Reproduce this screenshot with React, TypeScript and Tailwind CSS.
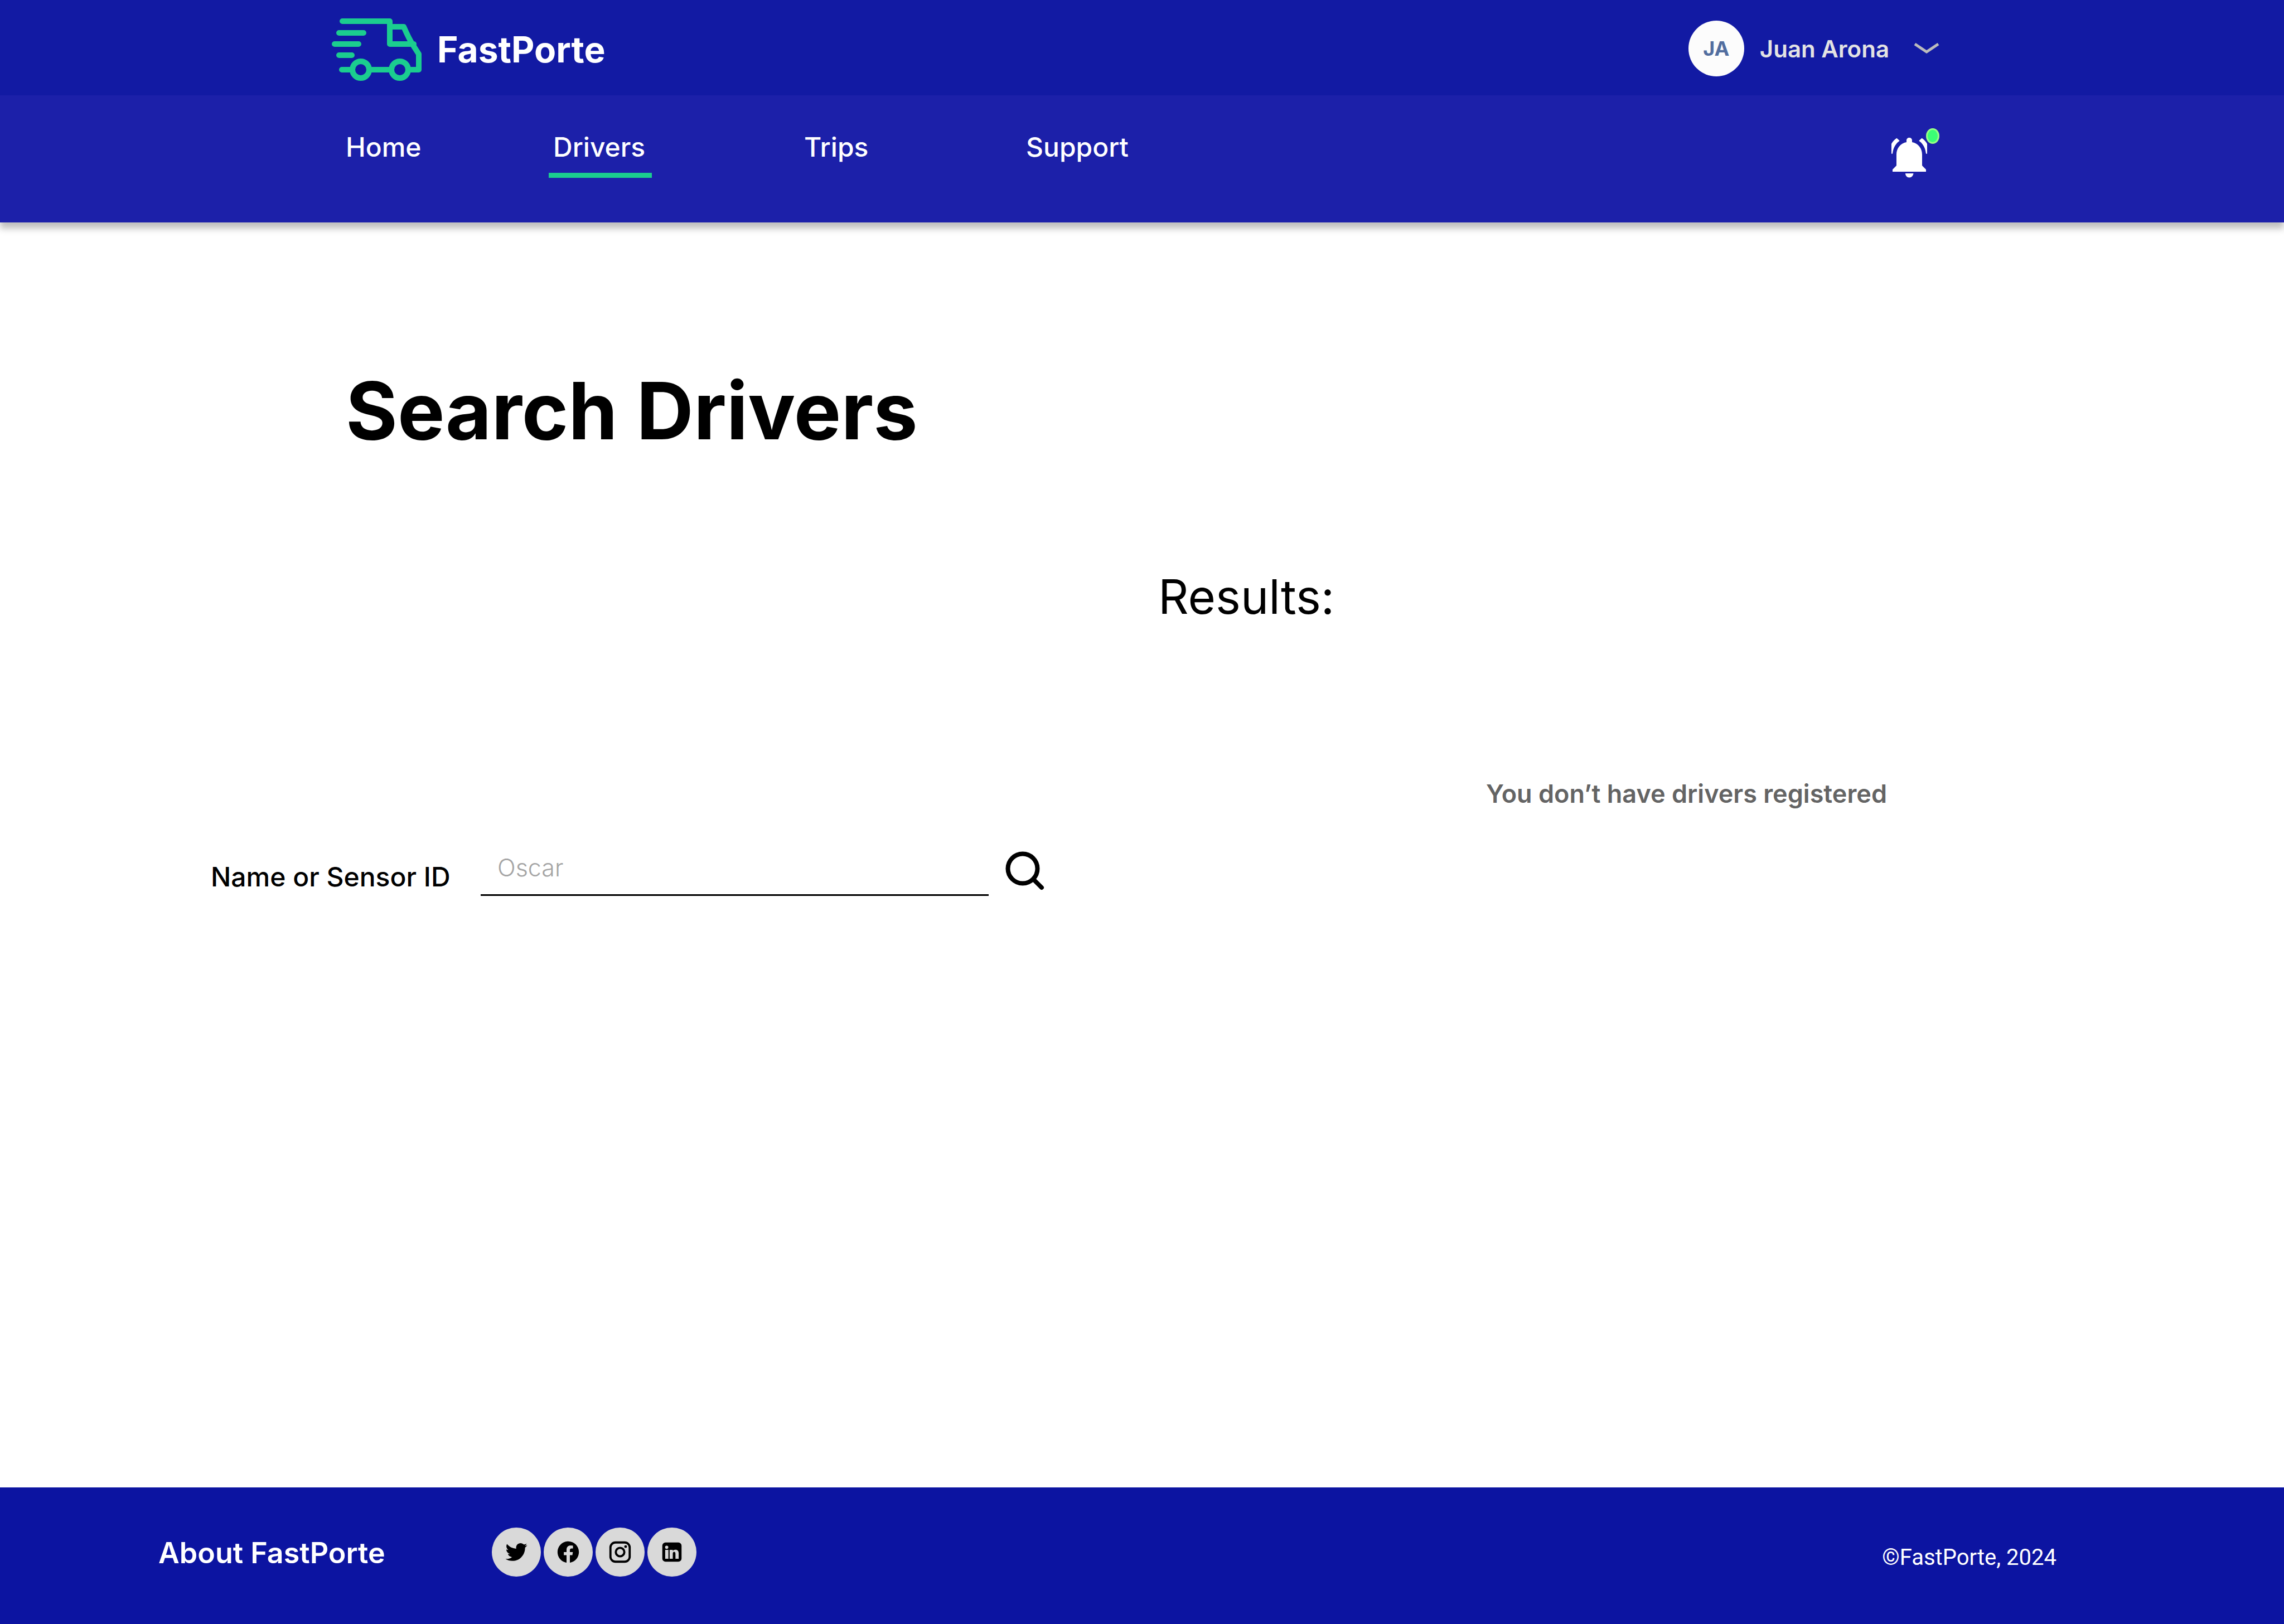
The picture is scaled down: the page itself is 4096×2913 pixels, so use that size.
import { type ReactNode } from "react";
import { RiFacebookCircleFill, RiTwitterFill } from "react-icons/ri";

const NAV = [
  { label: "Home", active: false, box: "w-[364px]" },
  { label: "Drivers", active: true, box: "w-[458px]" },
  { label: "Trips", active: false, box: "w-[398px]" },
  { label: "Support", active: false, box: "" },
];

function Truck() {
  return (
    <svg className="h-[116px] w-[164px]" viewBox="0 0 164 116" fill="none" stroke="#1bcd8f" strokeWidth="10" strokeLinecap="round" strokeLinejoin="round" aria-hidden="true">
      <path d="M20 7H105V48H148M105 17H130Q140 40 148 52L157 66V94H19" />
      <path d="M14 28H58M6 48H49M14 68H37" />
      <circle cx="53" cy="94" r="15" fill="#121aa3" />
      <circle cx="123" cy="94" r="15" fill="#121aa3" />
    </svg>
  );
}

function Bell() {
  return (
    <svg className="h-[72px] w-[64px]" viewBox="0 0 64 72" fill="#fff" aria-hidden="true">
      <path d="M9 50V30C9 19 16 10 27 8V5C27 2 29 0 32 0S37 2 37 5V8C48 10 55 19 55 30V50L62 57V61H2V57Z" />
      <path d="M25 64H39.500C39 68 36 71.500 32 71.500S25 68 25 64Z" />
      <path d="M9.500 0.700L14.700 5.500C7 11 3 19 2 28.700H0V11C2 7 5.500 3.500 9.500 0.700Z" />
      <path d="M54.500 0.700L49.300 5.500C57 11 61 19 62 28.700H64V11C62 7 58.500 3.500 54.500 0.700Z" />
    </svg>
  );
}

function Instagram() {
  return (
    <svg className="size-[46px]" viewBox="0 0 24 24" fill="none" stroke="currentColor" strokeWidth="2" aria-hidden="true">
      <rect x="3" y="3" width="18" height="18" rx="4.700" />
      <circle cx="12" cy="12" r="4" />
      <circle cx="17.200" cy="6.900" r="1.250" fill="currentColor" stroke="none" />
    </svg>
  );
}

function LinkedIn() {
  return (
    <svg className="size-[46px]" viewBox="0 0 24 24" fill="currentColor" fillRule="evenodd" aria-hidden="true">
      <path d="M6 3H18A3 3 0 0 1 21 6V18A3 3 0 0 1 18 21H6A3 3 0 0 1 3 18V6A3 3 0 0 1 6 3ZM7.100 5.950A1.500 1.500 0 1 0 7.100 8.950A1.500 1.500 0 1 0 7.100 5.950ZM5.700 9.900V18.300H8.700V9.900ZM9.850 9.900V18.300H12.800V13.600C12.800 12.500 13.200 11.800 14.050 11.800S15.300 12.500 15.300 13.600V18.300H18.300V13C18.300 11 17.200 9.750 15.400 9.750C14.200 9.750 13.300 10.200 12.800 11V9.900Z" />
    </svg>
  );
}

function Social({ label, children }: { label: string; children: ReactNode }) {
  return (
    <a href="#" aria-label={label} className="flex size-[88px] items-center justify-center rounded-full bg-[#d9d9d9] text-black">
      {children}
    </a>
  );
}

export default function App() {
  return (
    <div className="flex min-h-screen flex-col bg-white font-[Inter,sans-serif] text-black">
      <header className="shadow-[0_11px_11px_rgba(0,0,0,0.25)]">
        <div className="flex h-[171px] items-center justify-between bg-[#121aa3] pt-[3px] pr-[618px] pl-[594px]">
          <a href="#" className="flex items-center gap-[26px] pt-1 text-[64px] font-bold text-white">
            <Truck />
            FastPorte
          </a>
          <button type="button" className="flex items-center text-[42px] font-semibold text-[#e3e3e3]">
            <span className="mr-7 flex size-[100px] items-center justify-center rounded-full bg-[#fcfcfc] text-[36px] font-bold text-[#526e9f]">JA</span>
            Juan Arona
            <svg className="ml-11 h-5 w-[46px]" viewBox="0 0 46 20" fill="none" stroke="#bcbcbc" strokeWidth="5" aria-hidden="true">
              <path d="M2 2L23 16L44 2" />
            </svg>
          </button>
        </div>
        <div className="flex h-[228px] items-start justify-between bg-[#1c20a9] pr-[618px] pl-[620px]">
          <nav className="flex pt-[63px] text-[48px] leading-[60px] font-medium text-white">
            {NAV.map((n) => (
              <div key={n.label} className={n.box}>
                <a href="#" className={n.active ? "inline-block border-b-[9px] border-[#1bcd8f] pr-3 pb-4 pl-2" : "inline-block"}>
                  {n.label}
                </a>
              </div>
            ))}
          </nav>
          <button type="button" aria-label="Notifications" className="relative mt-[59px] pt-[17px] pr-[22px]">
            <Bell />
            <span className="absolute top-0 right-0 h-7 w-6 rounded-[50%] border-[3px] border-[#96ff85] bg-[#3bff75]" />
          </button>
        </div>
      </header>

      <main className="flex-1 pt-[247px]">
        <h1 className="pl-[620px] text-[142px] leading-[180px] font-bold">Search Drivers</h1>
        <div className="grid grid-cols-[2077px_1fr] pt-[190px]">
          <form className="flex items-start pt-[491px] pl-[378px]" onSubmit={(e) => e.preventDefault()}>
            <label htmlFor="driver" className="w-[484px] pt-[36px] text-[48px] leading-[60px] font-medium">Name or Sensor ID</label>
            <input id="driver" placeholder="Oscar" className="h-[100px] w-[911px] border-b-[3px] border-black px-[30px] text-[43px] font-light outline-none placeholder:text-[#a5a5a5]" />
            <button type="submit" aria-label="Search" className="ml-[30px] pt-5">
              <svg className="size-[72px]" viewBox="0 0 72 72" fill="none" stroke="#000" strokeWidth="8" strokeLinecap="round" aria-hidden="true">
                <circle cx="31" cy="31" r="26.500" />
                <path d="M50 50L65 65" />
              </svg>
            </button>
          </form>
          <section>
            <h2 className="text-[85px] leading-[110px] font-normal">Results:</h2>
            <p className="pt-[268px] pl-[588px] text-[45px] leading-[60px] font-semibold text-[#646464]">You don’t have drivers registered</p>
          </section>
        </div>
      </main>

      <footer className="flex h-[245px] items-center bg-[#0c14a1] pr-[408px] pb-[14px] pl-[284px] text-white">
        <h2 className="w-[598px] pt-[5px] text-[52px] font-semibold">About FastPorte</h2>
        <div className="flex gap-[5px]">
          <Social label="Twitter"><RiTwitterFill size={46} /></Social>
          <Social label="Facebook"><RiFacebookCircleFill size={46} /></Social>
          <Social label="Instagram"><Instagram /></Social>
          <Social label="LinkedIn"><LinkedIn /></Social>
        </div>
        <p className="ml-auto pt-5 font-[Roboto,sans-serif] text-[40px]">©FastPorte, 2024</p>
      </footer>
    </div>
  );
}
